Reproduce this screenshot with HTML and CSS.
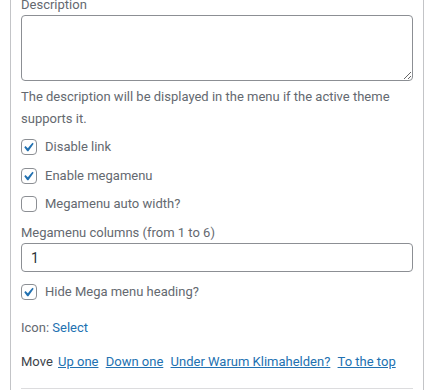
FILE: index.html
```html
<!DOCTYPE html>
<html>
<head>
    <title>Menu item settings</title>
    <link rel="stylesheet" href="styles.css">
</head>
<body>
<div class="menu-item-settings">
    <!-- Description -->
    <p class="field-description">
        <label class="field-label" for="edit-menu-item-description">Description</label>
        <textarea id="edit-menu-item-description" class="widefat"></textarea>
        <span class="description">The description will be displayed in the menu if the active theme supports it.</span>
    </p>

    <!-- Checkboxes -->
    <label class="check-row first">
        <span class="check-box"><svg viewBox="3.25 1.75 15.5 15.5"><path d="M14.83 4.89l1.34.94-5.81 8.38H9.02L5.78 9.67l1.34-1.25 2.57 2.4z"/></svg></span>
        Disable link
    </label>
    <label class="check-row">
        <span class="check-box"><svg viewBox="3.25 1.75 15.5 15.5"><path d="M14.83 4.89l1.34.94-5.81 8.38H9.02L5.78 9.67l1.34-1.25 2.57 2.4z"/></svg></span>
        Enable megamenu
    </label>
    <label class="check-row">
        <span class="check-box"></span>
        Megamenu auto width?
    </label>

    <!-- Columns -->
    <p class="field-columns">
        <label class="field-label" for="edit-menu-item-columns">Megamenu columns (from 1 to 6)</label>
        <input type="text" id="edit-menu-item-columns" class="widefat" value="1">
    </p>

    <label class="check-row hide-heading">
        <span class="check-box"><svg viewBox="3.25 1.75 15.5 15.5"><path d="M14.83 4.89l1.34.94-5.81 8.38H9.02L5.78 9.67l1.34-1.25 2.57 2.4z"/></svg></span>
        Hide Mega menu heading?
    </label>

    <p class="field-icon">Icon: <a href="#">Select</a></p>

    <p class="field-move">Move <a href="#">Up one</a> <a href="#">Down one</a> <a href="#">Under Warum Klimahelden?</a> <a href="#">To the top</a></p>

    <div class="menu-item-actions"></div>
</div>
</body>
</html>
```
FILE: styles.css
```css
body {
    margin: 0;
    background-color: #fff;
    font-family: Roboto, sans-serif;
    font-size: 13px;
    color: #646970;
}

.menu-item-settings {
    width: 392px;
    margin: -3px 0 0 10px;
    padding: 0 10px;
    border-left: 1px solid #c3c4c7;
    border-right: 1px solid #c3c4c7;
}

.menu-item-settings p {
    margin: 0;
}

.field-label {
    display: block;
    line-height: 15px;
}

.widefat {
    display: block;
    box-sizing: border-box;
    width: 100%;
    border: 1px solid #8c8f94;
    border-radius: 4px;
    background-color: #fff;
    color: #2c3338;
    font-family: Roboto, sans-serif;
    font-size: 14px;
    outline: none;
}

textarea.widefat {
    height: 66px;
    margin-top: 3px;
    padding: 2px 6px;
    resize: vertical;
}

input.widefat {
    height: 29px;
    margin-top: 3px;
    padding: 0 9px;
}

.description {
    display: block;
    margin-top: 5px;
    line-height: 22px;
}

.check-row {
    display: flex;
    align-items: center;
    gap: 8px;
    height: 16px;
    margin-top: 12px;
    line-height: 16px;
}

.check-row.first {
    margin-top: 9px;
}

.check-row + .check-row {
    margin-top: 13px;
}

.check-row + .check-row + .check-row {
    margin-top: 12px;
}

.check-box {
    box-sizing: border-box;
    width: 16px;
    height: 16px;
    flex-shrink: 0;
    border: 1px solid #8c8f94;
    border-radius: 4px;
    background-color: #fff;
}

.check-box svg {
    display: block;
    width: 14px;
    height: 14px;
    fill: #2271b1;
}

.field-columns {
    margin-top: 13px !important;
}

.hide-heading {
    margin-top: 12px;
}

.field-icon {
    margin-top: 20px !important;
    line-height: 15px;
}

.field-move {
    margin-top: 19px !important;
    line-height: 15px;
    color: #3c434a;
}

.menu-item-settings a {
    color: #2271b1;
    text-decoration: underline;
}

.field-icon a {
    text-decoration: none;
}

.field-move a {
    margin: 0 2px;
}

.menu-item-actions {
    margin-top: 19px;
    height: 10px;
    border-top: 1px solid #dcdcde;
}
```
